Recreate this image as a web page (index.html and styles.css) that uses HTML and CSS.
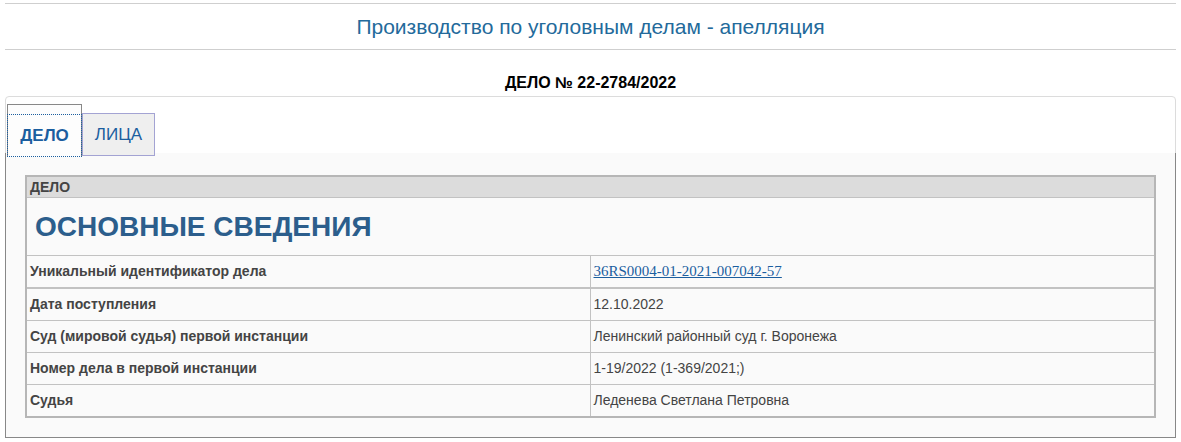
FILE: index.html
```html
<!DOCTYPE html>
<html lang="ru">
  <head>
    <meta charset="UTF-8" />
    <meta name="viewport" content="width=device-width, initial-scale=1.0" />
    <title>Производство по уголовным делам - апелляция</title>
    <link rel="stylesheet" href="styles.css">
  </head>
  <body>
    <div class="page">
      <div class="header">Производство по уголовным делам - апелляция</div>
      <h2 class="case-no">ДЕЛО № 22-2784/2022</h2>

      <div class="tabs">
        <ul class="tab-nav">
          <li class="tab active"><a href="#cont1">ДЕЛО</a></li>
          <li class="tab"><a href="#cont2">ЛИЦА</a></li>
        </ul>
        <div class="tab-panel" id="cont1">
          <table class="info">
            <tr>
              <td colspan="2" class="group">ДЕЛО</td>
            </tr>
            <tr>
              <td colspan="2" class="title"><b>ОСНОВНЫЕ СВЕДЕНИЯ</b></td>
            </tr>
            <tr class="first">
              <td class="label">Уникальный идентификатор дела</td>
              <td class="value"><a href="#">36RS0004-01-2021-007042-57</a></td>
            </tr>
            <tr>
              <td class="label">Дата поступления</td>
              <td class="value">12.10.2022</td>
            </tr>
            <tr>
              <td class="label">Суд (мировой судья) первой инстанции</td>
              <td class="value">Ленинский районный суд г. Воронежа</td>
            </tr>
            <tr>
              <td class="label">Номер дела в первой инстанции</td>
              <td class="value">1-19/2022 (1-369/2021;)</td>
            </tr>
            <tr class="last">
              <td class="label">Судья</td>
              <td class="value">Леденева Светлана Петровна</td>
            </tr>
          </table>
        </div>
      </div>
    </div>
  </body>
</html>
```

FILE: styles.css
```css
/* General Styles */
body {
  margin: 0;
  font-family: "Liberation Sans", Arial, sans-serif;
  background-color: #fff;
  color: #333;
}

.page {
  padding: 3px 5px 0;
}

.header {
  height: 45px;
  line-height: 45px;
  border-top: 1px solid #cfcfcf;
  border-bottom: 1px solid #cfcfcf;
  text-align: center;
  font-size: 21px;
  color: #236a9b;
}

.case-no {
  margin: 24px 0 4px;
  line-height: 18px;
  font-size: 16px;
  font-weight: bold;
  text-align: center;
  color: #000;
}

/* Tabs */
.tabs {
  border: 1px solid #dcdcdc;
  border-radius: 4px;
}

.tab-nav {
  display: flex;
  align-items: flex-start;
  height: 49px;
  margin: 0;
  padding: 7px 0 0 1px;
  list-style: none;
}

.tab {
  position: relative;
  z-index: 1;
  box-sizing: border-box;
  width: 73px;
  height: 43px;
  margin-top: 9px;
  border: 1px solid #a3a3d3;
  background-color: #efefef;
  text-align: center;
}

.tab a {
  display: block;
  line-height: 41px;
  font-size: 17px;
  color: #1b5e9f;
  text-decoration: none;
}

.tab.active {
  width: 75px;
  height: 53px;
  margin-top: 0;
  border: 1px solid #888;
  border-bottom: none;
  background-color: #fdfdfd;
}

.tab.active a {
  margin-top: 10px;
  font-weight: bold;
  outline: 1px dotted #1b5e9f;
}

.tab-panel {
  margin: 0 -1px -1px;
  padding: 22px 19px 19px;
  border: 1px solid #888;
  border-top: none;
  background-color: #fafafa;
}

/* Case table */
.info {
  width: 100%;
  border-collapse: separate;
  border-spacing: 0;
  border: 2px solid #b6b6b6;
  font-size: 14px;
  color: #444;
}

.info td {
  padding: 0 3px;
  line-height: 31px;
  border-bottom: 1px solid #c2c2c2;
  vertical-align: middle;
}

.info .group {
  line-height: 20px;
  background-color: #dcdcdc;
  font-weight: bold;
}

.info .title {
  line-height: 57px;
  padding-left: 8px;
  font-size: 28px;
  color: #2c5e8c;
}

.info .label {
  width: 50%;
  font-weight: bold;
  border-right: 1px solid #c2c2c2;
}

.info .value {
  padding-left: 3px;
}

.info .value a {
  font-family: "Liberation Serif", "Times New Roman", serif;
  font-size: 15px;
  color: #1b5e9f;
}

.info .first td {
  border-bottom: 2px solid #c2c2c2;
}

.info .last td {
  border-bottom: none;
}
```
